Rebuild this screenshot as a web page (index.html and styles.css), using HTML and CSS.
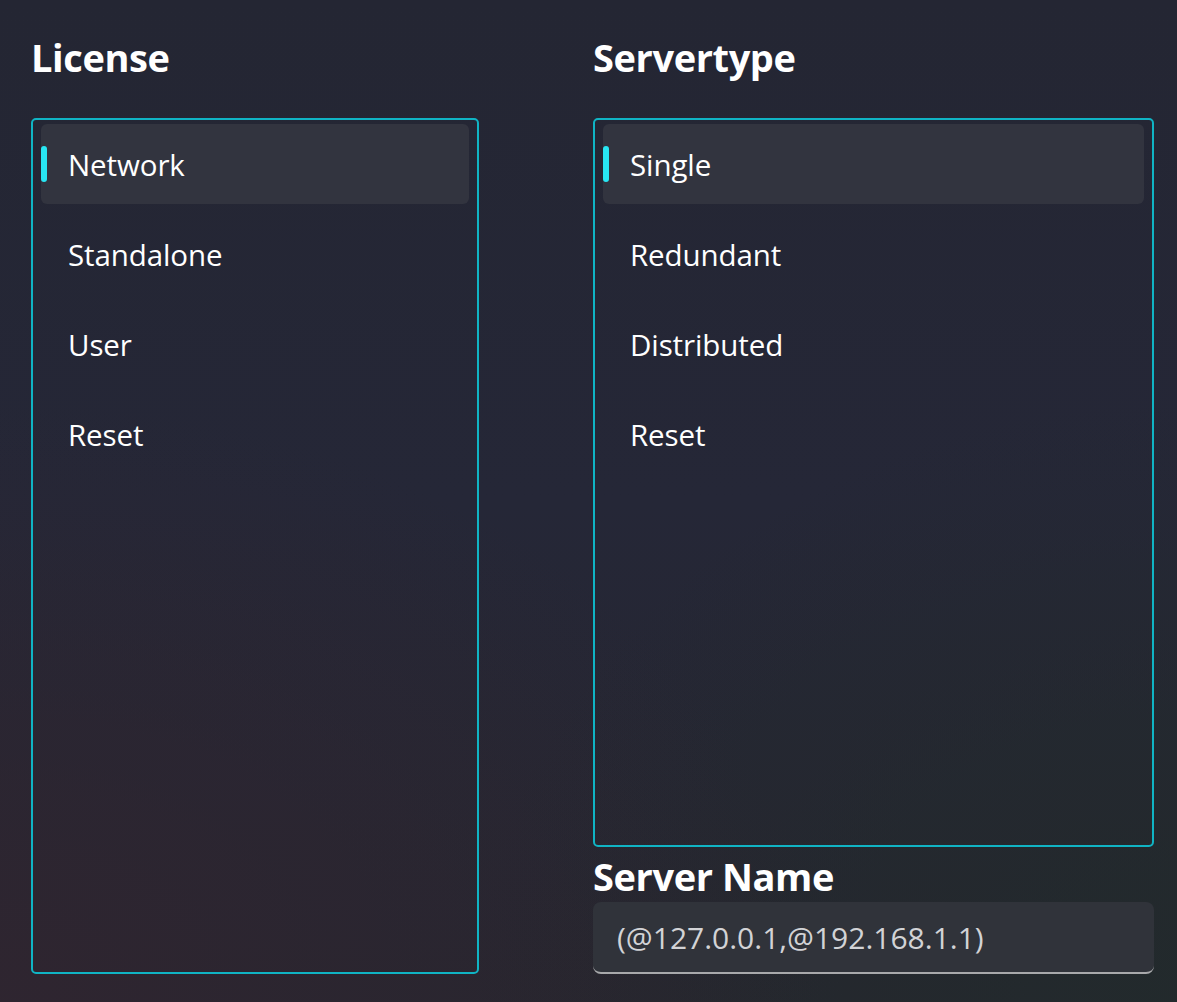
FILE: index.html
```html
<!DOCTYPE html>
<html lang="en">
<head>
<meta charset="utf-8">
<title>Settings</title>
<link rel="stylesheet" href="styles.css">
</head>
<body>
<main class="page">
  <section class="column">
    <h2 class="heading">License</h2>
    <ul class="list">
      <li class="item selected"><span class="indicator"></span>Network</li>
      <li class="item">Standalone</li>
      <li class="item">User</li>
      <li class="item">Reset</li>
    </ul>
  </section>
  <section class="column">
    <h2 class="heading">Servertype</h2>
    <ul class="list">
      <li class="item selected"><span class="indicator"></span>Single</li>
      <li class="item">Redundant</li>
      <li class="item">Distributed</li>
      <li class="item">Reset</li>
    </ul>
    <h2 class="heading heading-sub">Server Name</h2>
    <div class="textbox">(@127.0.0.1,@192.168.1.1)</div>
  </section>
</main>
</body>
</html>
```

FILE: styles.css
```css
html, body {
  margin: 0;
  padding: 0;
  height: 100%;
}

body {
  font-family: "Open Sans", "Noto Sans", sans-serif;
  color: #ffffff;
  background:
    radial-gradient(ellipse 70% 60% at 0% 100%, rgba(47, 37, 48, 0.95) 0%, rgba(47, 37, 48, 0) 100%),
    radial-gradient(ellipse 60% 60% at 100% 100%, rgba(34, 42, 44, 0.95) 0%, rgba(34, 42, 44, 0) 100%),
    linear-gradient(180deg, #242633 0%, #252737 50%, #26262f 100%);
  overflow: hidden;
}

.page {
  box-sizing: border-box;
  height: 1002px;
  display: grid;
  grid-template-columns: 448px 561px;
  column-gap: 114px;
  padding: 0 0 28px 31px;
}

.column {
  display: flex;
  flex-direction: column;
  min-height: 0;
}

.heading {
  margin: 0;
  padding-top: 29px;
  font-size: 38px;
  line-height: 56px;
  font-weight: 700;
  letter-spacing: -0.4px;
}

.heading-sub {
  padding-top: 0;
  margin-top: 3px;
  line-height: 52px;
}

.list {
  list-style: none;
  margin: 33px 0 0;
  padding: 4px 8px 0;
  flex: 1;
  border: 2px solid #10b4c4;
  border-radius: 5px;
  display: flex;
  flex-direction: column;
  gap: 10px;
}

.item {
  position: relative;
  height: 80px;
  display: flex;
  align-items: center;
  padding-left: 27px;
  font-size: 29.5px;
  letter-spacing: -0.1px;
  border-radius: 6px;
}

.item.selected {
  background: #32343f;
}

.indicator {
  position: absolute;
  left: 0;
  top: 22px;
  width: 6px;
  height: 36px;
  border-radius: 3px;
  background: #28e6f3;
}

.textbox {
  box-sizing: border-box;
  height: 72px;
  display: flex;
  align-items: center;
  padding-left: 24px;
  font-size: 30px;
  color: #d2d3d6;
  background: #30333a;
  border-radius: 8px;
  border-bottom: 2px solid #a8a9ab;
}
```
